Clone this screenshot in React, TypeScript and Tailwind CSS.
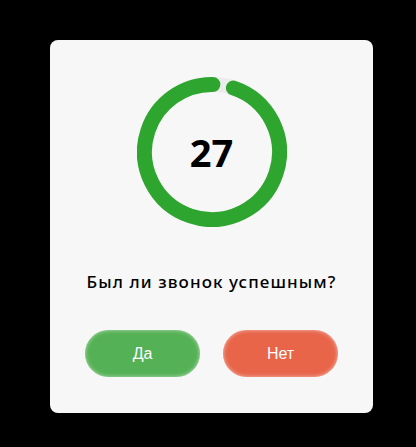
export default function App() {
  const r = 67.5;
  const c = 2 * Math.PI * r;
  const arc = c * 0.949;

  return (
    <div className="w-[416px] h-[447px] bg-black pl-[50px] pt-[40px]">
      <div className="w-[323px] h-[373px] bg-[#f7f7f7] rounded-[8px] flex flex-col items-center pt-[37px]">
        <div className="relative w-[150px] h-[150px]">
          <svg width="150" height="150" viewBox="0 0 150 150" className="absolute inset-0">
            <circle cx="75" cy="75" r={r} fill="none" stroke="#ececec" strokeWidth="15" />
            <circle
              cx="75"
              cy="75"
              r={r}
              fill="none"
              stroke="#2ea52e"
              strokeWidth="15"
              strokeLinecap="round"
              strokeDasharray={`${arc} ${c}`}
              transform="rotate(-71.5 75 75)"
            />
          </svg>
          <div className="absolute inset-0 flex items-center justify-center font-['Noto_Sans',sans-serif] font-bold text-[38px] text-black">
            27
          </div>
        </div>
        <p className="mt-[43px] font-['Noto_Sans',sans-serif] font-medium text-[17px] tracking-[0.065em] leading-[24px] text-black">
          Был ли звонок успешным?
        </p>
        <div className="mt-[36px] flex gap-[23px]">
          <button className="w-[115px] h-[47px] rounded-full bg-[#55b155] text-white text-[16px] font-['Liberation_Sans',Arial,sans-serif] shadow-[inset_0_0_4px_rgba(255,255,255,0.6)]">
            Да
          </button>
          <button className="w-[115px] h-[47px] rounded-full bg-[#e8654a] text-white text-[16px] font-['Liberation_Sans',Arial,sans-serif] shadow-[inset_0_0_4px_rgba(255,255,255,0.6)]">
            Нет
          </button>
        </div>
      </div>
    </div>
  );
}
